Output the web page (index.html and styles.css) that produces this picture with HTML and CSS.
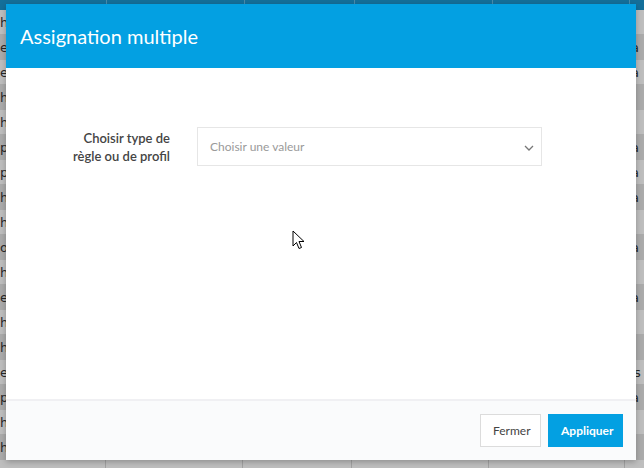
FILE: index.html
```html
<!DOCTYPE html>
<html lang="fr">
<head>
<meta charset="utf-8">
<title>Assignation multiple</title>
<link rel="stylesheet" href="styles.css">
</head>
<body>
<div class="bg-table">
  <div class="bg-head"><span class="c1"></span><span class="c2"></span><span class="c3"></span><span class="c4"></span><span class="c5"></span><span class="c6"></span></div>
  <div class="bg-row"><span class="c1">h</span><span class="c2"></span><span class="c3"></span><span class="c4"></span><span class="c5"></span><span class="c6"></span></div>
  <div class="bg-row alt"><span class="c1">e</span><span class="c2"></span><span class="c3"></span><span class="c4"></span><span class="c5"></span><span class="c6">ta</span></div>
  <div class="bg-row"><span class="c1">e</span><span class="c2"></span><span class="c3"></span><span class="c4"></span><span class="c5"></span><span class="c6">ta</span></div>
  <div class="bg-row alt"><span class="c1">h</span><span class="c2"></span><span class="c3"></span><span class="c4"></span><span class="c5"></span><span class="c6"></span></div>
  <div class="bg-row"><span class="c1">h</span><span class="c2"></span><span class="c3"></span><span class="c4"></span><span class="c5"></span><span class="c6"></span></div>
  <div class="bg-row alt"><span class="c1">p</span><span class="c2"></span><span class="c3"></span><span class="c4"></span><span class="c5"></span><span class="c6">ta</span></div>
  <div class="bg-row"><span class="c1">p</span><span class="c2"></span><span class="c3"></span><span class="c4"></span><span class="c5"></span><span class="c6">ta</span></div>
  <div class="bg-row alt"><span class="c1">h</span><span class="c2"></span><span class="c3"></span><span class="c4"></span><span class="c5"></span><span class="c6">ta</span></div>
  <div class="bg-row"><span class="c1">h</span><span class="c2"></span><span class="c3"></span><span class="c4"></span><span class="c5"></span><span class="c6"></span></div>
  <div class="bg-row alt"><span class="c1">ou</span><span class="c2"></span><span class="c3"></span><span class="c4"></span><span class="c5"></span><span class="c6">ta</span></div>
  <div class="bg-row"><span class="c1">h</span><span class="c2"></span><span class="c3"></span><span class="c4"></span><span class="c5"></span><span class="c6"></span></div>
  <div class="bg-row alt"><span class="c1">e</span><span class="c2"></span><span class="c3"></span><span class="c4"></span><span class="c5"></span><span class="c6">ta</span></div>
  <div class="bg-row"><span class="c1">h</span><span class="c2"></span><span class="c3"></span><span class="c4"></span><span class="c5"></span><span class="c6"></span></div>
  <div class="bg-row alt"><span class="c1">h</span><span class="c2"></span><span class="c3"></span><span class="c4"></span><span class="c5"></span><span class="c6"></span></div>
  <div class="bg-row"><span class="c1">e</span><span class="c2"></span><span class="c3"></span><span class="c4"></span><span class="c5"></span><span class="c6">es</span></div>
  <div class="bg-row alt"><span class="c1">p</span><span class="c2"></span><span class="c3"></span><span class="c4"></span><span class="c5"></span><span class="c6">ta</span></div>
  <div class="bg-row"><span class="c1">h</span><span class="c2"></span><span class="c3"></span><span class="c4"></span><span class="c5"></span><span class="c6"></span></div>
  <div class="bg-row alt"><span class="c1">h</span><span class="c2"></span><span class="c3"></span><span class="c4"></span><span class="c5"></span><span class="c6"></span></div>
  <div class="bg-row"><span class="c1"></span><span class="c2"></span><span class="c3"></span><span class="c4"></span><span class="c5"></span><span class="c6"></span></div>
</div>
<div class="backdrop"></div>
<div class="modal">
  <div class="modal-header">
    <h1 class="modal-title">Assignation multiple</h1>
  </div>
  <div class="modal-body">
    <div class="form-row">
      <label class="form-label">Choisir type de<br>règle ou de profil</label>
      <div class="select">
        <span class="select-placeholder">Choisir une valeur</span>
        <svg class="chevron" width="10" height="6" viewBox="0 0 10 6"><path d="M1 1 L5 5 L9 1" fill="none" stroke="#777" stroke-width="1.3"/></svg>
      </div>
    </div>
  </div>
  <div class="modal-footer">
    <button class="btn btn-default">Fermer</button>
    <button class="btn btn-primary">Appliquer</button>
  </div>
</div>
<svg class="cursor" width="14" height="21" viewBox="0 0 14 21"><path d="M1 1 L1 16 L4.5 12.5 L7 18.5 L9.5 17.5 L7 11.5 L12 11.5 Z" fill="#fff" stroke="#000" stroke-width="1" stroke-linejoin="miter"/></svg>
</body>
</html>
```
FILE: styles.css
```css
html, body {
  margin: 0;
  padding: 0;
}
body {
  width: 644px;
  height: 468px;
  overflow: hidden;
  position: relative;
  font-family: Lato, "Open Sans", sans-serif;
  background: #ffffff;
}
.bg-table {
  display: flex;
  flex-direction: column;
  font-family: "DejaVu Sans", sans-serif;
  font-size: 13px;
  color: #333;
}
.bg-head {
  display: flex;
  height: 10px;
  background: #1a8fc6;
}
.bg-head span {
  border-right: 1px solid #5fb3dc;
}
.bg-row {
  display: flex;
  height: 25px;
  line-height: 25px;
  background: #f4f4f4;
  border-bottom: 1px solid #dcdcdc;
  box-sizing: border-box;
}
.bg-row.alt {
  background: #dcdcdc;
}
.bg-row span {
  border-right: 1px solid #d0d0d0;
  overflow: hidden;
  white-space: nowrap;
  box-sizing: border-box;
}
.c1 { width: 106px; }
.c2 { width: 137px; }
.c3 { width: 109px; }
.c4 { width: 137px; }
.c5 { width: 136px; }
.c6 { flex: 1; padding-left: 1px; border-right: none !important; }
.backdrop {
  position: absolute;
  inset: 0;
  background: rgba(0, 0, 0, 0.22);
}
.modal {
  position: absolute;
  left: 6px;
  top: 4px;
  width: 630px;
  height: 456px;
  background: #ffffff;
  display: flex;
  flex-direction: column;
  box-shadow: 0 2px 6px rgba(0, 0, 0, 0.25);
}
.modal-header {
  height: 64px;
  background: #03a0e2;
  display: flex;
  align-items: center;
  padding-left: 14px;
  flex-shrink: 0;
}
.modal-title {
  margin: 0;
  font-weight: 400;
  font-size: 20px;
  color: #ffffff;
  padding-bottom: 1px;
}
.modal-body {
  flex: 1;
  padding: 59px 94px 0 60px;
}
.form-row {
  display: flex;
  align-items: center;
  gap: 27px;
}
.form-label {
  width: 104px;
  text-align: right;
  font-size: 13px;
  font-weight: 600;
  line-height: 18px;
  color: #444;
}
.select {
  flex: 1;
  height: 39px;
  box-sizing: border-box;
  border: 1px solid #e6e6e6;
  display: flex;
  align-items: center;
  justify-content: space-between;
  padding: 0 7px 0 12px;
  background: #fff;
}
.select-placeholder {
  font-size: 12px;
  color: #9a9a9a;
}
.chevron {
  margin-top: 2px;
}
.modal-footer {
  height: 61px;
  box-sizing: border-box;
  border-top: 2px solid #f0f0f3;
  background: #fafbfc;
  display: flex;
  align-items: center;
  justify-content: flex-end;
  gap: 7px;
  padding-right: 13px;
  flex-shrink: 0;
}
.btn {
  height: 33px;
  font-family: Lato, "Open Sans", sans-serif;
  font-size: 12px;
  border-radius: 0;
  padding: 0 12px;
  cursor: pointer;
}
.btn-default {
  background: #ffffff;
  border: 1px solid #dcdcdc;
  color: #444;
  font-weight: 400;
  width: 61px;
}
.btn-primary {
  background: #03a0e2;
  border: 1px solid #03a0e2;
  color: #ffffff;
  font-weight: 700;
  width: 75px;
}
.cursor {
  position: absolute;
  left: 292px;
  top: 230px;
}
```
